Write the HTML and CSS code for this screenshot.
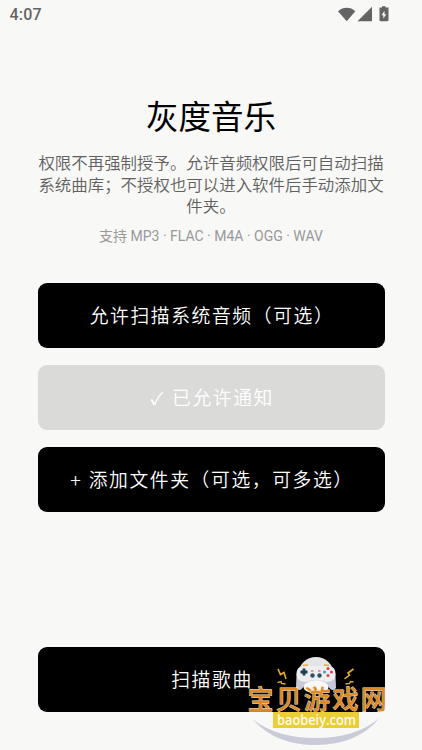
FILE: index.html
```html
<!DOCTYPE html>
<html lang="zh-CN">
<head>
<meta charset="utf-8">
<title>灰度音乐</title>
<link rel="stylesheet" href="styles.css">
</head>
<body>
<div class="screen">
  <header class="status">
    <span class="clock">4:07</span>
    <svg class="status-icons" width="54" height="18" viewBox="0 0 54 18" fill="#646464">
      <path d="M0 5.200C5 .7 12.500.7 17.300 5.200L8.700 15.200Z"/>
      <path d="M19.500 15.200L34 .8V15.200Z"/>
      <path fill-rule="evenodd" d="M44 1.500V.3h3.500v1.200H50.500V14q0 1.200-1.200 1.200h-6.600q-1.200 0-1.200-1.200V1.500ZM46.500 4.800L43.500 9.200h1.800v3.300l3-4.300h-1.800Z"/>
    </svg>
  </header>
  <main class="content">
    <h1 class="title">灰度音乐</h1>
    <p class="intro">权限不再强制授予。允许音频权限后可自动扫描<br>系统曲库；不授权也可以进入软件后手动添加文<br>件夹。</p>
    <p class="formats">支持 MP3 · FLAC · M4A · OGG · WAV</p>
    <div class="actions">
      <button class="btn">允许扫描系统音频（可选）</button>
      <button class="btn btn-done"><svg class="check" width="14" height="16" viewBox="0 0 14 16" fill="none" stroke="currentColor"><path stroke-width="2" d="M1.200 8.500Q3.200 10.500 4.500 14.200"/><path stroke-width="1.300" d="M4.500 14.200Q7.500 6 13 1"/></svg>已允许通知</button>
      <button class="btn">+ 添加文件夹（可选，可多选）</button>
    </div>
    <button class="btn btn-scan">扫描歌曲</button>
  </main>
  <svg class="watermark" width="150" height="100" viewBox="240 650 150 100">
    <path d="M252.500 719Q276 738 316 738T379.500 718Q357 745 316 745T252.500 719Z" fill="#c9cbd9"/>
    <ellipse cx="316" cy="674" rx="17.500" ry="17" fill="#e4e5e7"/>
    <path d="M302 666h28q5 1 5.500 9l.5 13q-4 5-8-2-4-6-12-6t-12 6q-4 7-8 2l.5-13q.5-8 5.500-9Z" fill="#c9cad8"/>
    <path d="M303 666h26q6.500 1 6.500 8 0 8-9.500 8-5-2-10-2t-10 2q-9.500 0-9.500-8 0-7 6.500-8Z" fill="#eeeef1"/>
    <ellipse cx="316" cy="687" rx="12.500" ry="6.500" fill="#f8f8f8"/>
    <path d="M304 668.500v7M300.500 672h7" stroke="#203d50" stroke-width="2.800"/>
    <g fill="#d6404a"><circle cx="328" cy="668.500" r="1.500"/><circle cx="328" cy="675.500" r="1.500"/><circle cx="324.500" cy="672" r="1.500" fill="#3c9eb5"/><circle cx="331.500" cy="672" r="1.500"/></g>
    <g fill="#315060"><circle cx="312.500" cy="675.500" r="2.200"/><circle cx="319.500" cy="675.500" r="2.200"/></g>
    <path d="M311 671h2.500M318 671h2.500" stroke="#d6404a"/>
    <path d="M303 665.500l5-.5M324 665l5 .5" stroke="#e8af25" stroke-width="1.500"/>
    <g fill="none" stroke="#e8ad27" stroke-width="1.600">
      <path d="M278 669l2.500 5.500 3.500-2 2 6.500M353.500 669l-5.500 4 1.500 2-5 4"/>
      <path d="M277.500 682.500l3.500-1 .5 2 4 .5M353.500 682l-3-.5-1 2-4 .5" stroke-width="1.300"/>
    </g>
    <text class="mark-name" x="247.500" y="708.700">宝贝游戏网</text>
    <rect x="273" y="712" width="86" height="16" fill="#ebcd35"/>
    <text class="mark-url" x="277" y="724.500" textLength="79" lengthAdjust="spacingAndGlyphs">baobeiy.com</text>
  </svg>
</div>
</body>
</html>
```
FILE: styles.css
```css
* { box-sizing: border-box; }
body {
  margin: 0;
  background: #f8f8f6;
  font-family: Roboto, "Noto Sans CJK SC", sans-serif;
}
.screen {
  position: relative;
  height: 750px;
  overflow: hidden;
  display: flex;
  flex-direction: column;
}
.status {
  flex: none;
  height: 30px;
  padding: 0 30px 1px 9.500px;
  display: flex;
  align-items: center;
  justify-content: space-between;
}
.clock {
  font-size: 16px;
  font-weight: 500;
  letter-spacing: .2px;
  color: #646464;
}
.status-icons { flex: none; }
.content {
  flex: 1;
  display: flex;
  flex-direction: column;
  padding: 64px 37.500px 37.600px;
}
.title {
  margin: 0;
  font-size: 32.500px;
  line-height: 48px;
  font-weight: 400;
  text-align: center;
  color: #000;
}
.intro {
  margin: 11px -10px 0;
  font-size: 16.450px;
  line-height: 21.600px;
  font-weight: 350;
  text-align: center;
  white-space: nowrap;
  color: #606060;
}
.formats {
  margin: 8px 0 0;
  font-size: 14px;
  line-height: 20px;
  font-weight: 400;
  text-align: center;
  color: #999;
}
.actions {
  margin-top: 37px;
  display: flex;
  flex-direction: column;
  gap: 16.500px;
}
.btn {
  flex: none;
  width: 100%;
  height: 65.500px;
  padding: 2px 0 0 2px;
  border: 0;
  border-radius: 9px;
  background: #000;
  color: #fff;
  font: 350 18.800px/28px Roboto, "Noto Sans CJK SC", sans-serif;
  letter-spacing: 1.600px;
  white-space: nowrap;
}
.btn-done { background: #dadad8; }
.check { margin-right: 8px; vertical-align: -2px; }
.btn-scan { margin-top: auto; }
.watermark {
  position: absolute;
  left: 240px;
  top: 650px;
}
.mark-name {
  font: 500 26px "Noto Sans CJK SC", sans-serif;
  letter-spacing: 2.300px;
  fill: #df8925;
  stroke: #fff0d8;
  stroke-width: .8px;
  paint-order: stroke;
}
.mark-url {
  font: 600 14.500px "Open Sans", sans-serif;
  fill: #fffce6;
}
```
